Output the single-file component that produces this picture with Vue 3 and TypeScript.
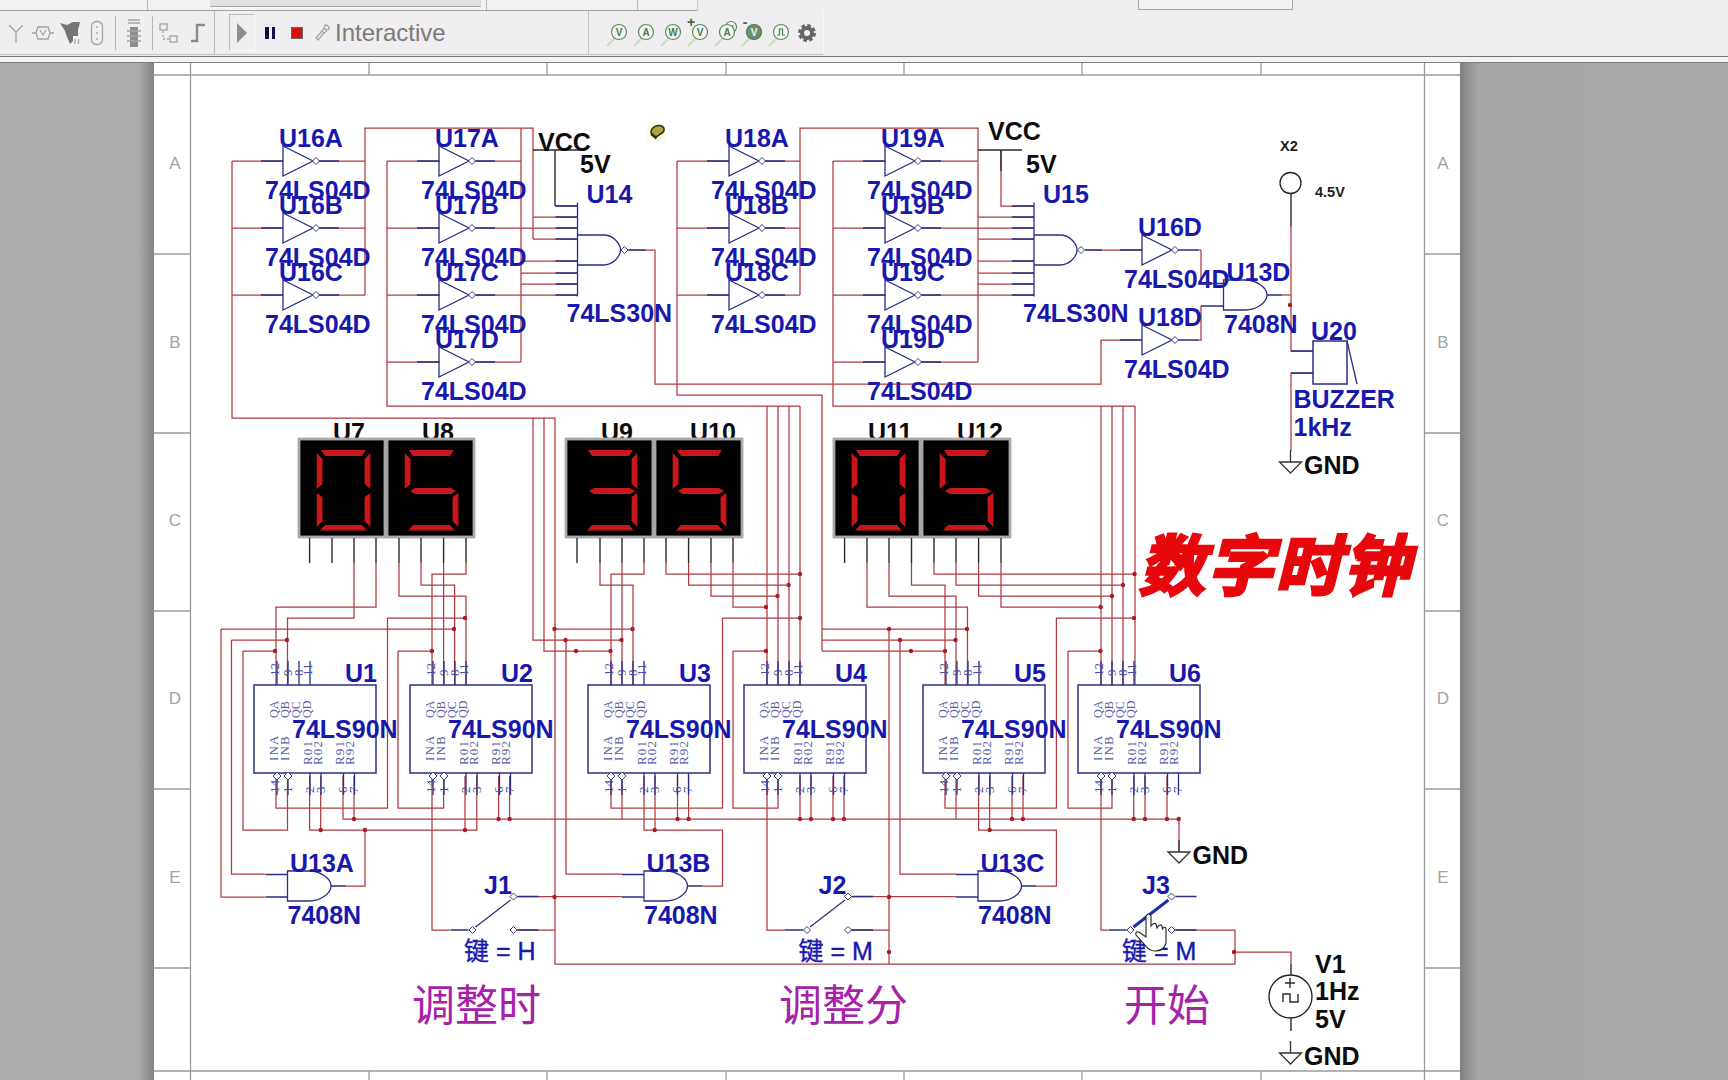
<template>
  <div class="app">
    <div class="tabs">
      <div class="tab-strip">
        <span class="tab tab-a"></span>
        <span class="tab tab-b"></span>
        <span class="tab tab-c"></span>
        <span class="tab tab-d"></span>
      </div>
      <div class="tab-far"></div>
    </div>

    <div class="toolbars">
      <div class="bar">
        <div class="tools tools-misc">
          <span class="tool">
            <svg width="18" height="22" viewBox="0 0 18 22" class="ico"><path d="M9 21V10M2 3l7 7 7-7" /></svg>
          </span>
          <span class="tool">
            <svg width="24" height="20" viewBox="0 0 24 20" class="ico"><path d="M1 10h4M19 10h4M7 4l10 0 2 6-2 6H7l-2-6z" /><path d="M9 7l3 5 3-5" /></svg>
          </span>
          <span class="tool">
            <svg width="22" height="24" viewBox="0 0 22 24"><path class="solid dark" d="M1 2L8 4L14 1L21 1L19 9L19 15L14 15L14 20L11 23L8 16L6 10Z" /><path class="ico" d="M16 18v5M19.5 18v5" /></svg>
          </span>
          <span class="tool">
            <svg width="14" height="26" viewBox="0 0 14 26" class="ico"><rect x="1.5" y="1.5" width="11" height="23" rx="5" /><path d="M7 6v2M7 12v2M7 18v2" /></svg>
          </span>
          <i class="sep sep-a"></i>
          <span class="tool tool-wide">
            <svg width="16" height="30" viewBox="0 0 16 30"><path class="ico" d="M2 2h12M2 5h12" /><rect class="solid" x="4" y="9" width="8" height="20" /><path class="ico" d="M1 13h14M1 18h14M1 23h14" /></svg>
          </span>
          <i class="sep"></i>
          <span class="tool tool-c">
            <svg width="22" height="22" viewBox="0 0 22 22" class="ico"><rect x="2" y="2" width="7" height="6" /><rect x="12" y="14" width="7" height="6" /><path stroke-dasharray="2 2" d="M5 9v8h6" /></svg>
          </span>
          <span class="tool tool-d">
            <svg width="16" height="20" viewBox="0 0 16 20"><path class="step" d="M1 18h6V2h8" /></svg>
          </span>
        </div>

        <div class="tools tools-sim">
          <span class="play">
            <svg width="12" height="22" viewBox="0 0 12 22"><path class="solid" d="M1 1l10 10L1 21z" /></svg>
          </span>
          <span class="pause"><i></i><i></i></span>
          <span class="stop"></span>
          <svg class="wrench ico" width="16" height="18" viewBox="0 0 16 18"><path d="M11 1c3 0 4 2 4 4l-3 1-2-2 1-3zM10 4L8 7l2 2 3-2M8 7L2 14l2 2 6-7" /></svg>
          <span class="sim-mode">Interactive</span>
        </div>

        <div class="tools tools-meters">
          <span v-for="m in meters" :key="m.key" class="meter">
            <svg width="26" height="30" viewBox="0 0 26 30">
              <path class="probe" d="M2 28l8-8" />
              <text v-if="m.sign" x="5" y="9" class="meter-sign">{{ m.sign }}</text>
              <circle v-if="m.key === 'av'" cx="18" cy="9" r="5.5" class="meter-ring" />
              <text v-if="m.key === 'av'" x="18" y="12" class="meter-letter small">V</text>
              <circle cx="14" cy="14" r="7.5" :class="m.heavy ? 'meter-ring heavy' : 'meter-ring'" />
              <path v-if="m.key === 'p'" class="pulse" d="M10 17h2.5v-6h3v6h2.5" />
              <text v-else x="14" y="17.5" :class="m.heavy ? 'meter-letter light' : 'meter-letter'">{{ m.letter }}</text>
            </svg>
          </span>
          <span class="meter">
            <svg width="20" height="22" viewBox="0 0 20 22">
              <circle cx="10" cy="11" r="5" class="gear-in" />
              <circle cx="10" cy="11" r="7.5" class="gear-out" />
            </svg>
          </span>
        </div>
      </div>
      <div class="bar-rest"></div>
    </div>
    <div class="rule-band"></div>

    <div class="workspace">
      <div class="gutter gutter-left"></div>
      <div class="paper">
        <svg class="sheet" width="1306" height="1018" viewBox="154 62 1306 1018">
          <!-- sheet frame -->
          <path class="frame" :d="frameLines" />
          <text v-for="r in rowMarks" :key="'l' + r.t" x="175" :y="r.y" class="mark">{{ r.t }}</text>
          <text v-for="r in rowMarks" :key="'r' + r.t" x="1443" :y="r.y" class="mark">{{ r.t }}</text>

          <!-- display labels sit behind the displays -->
          <text v-for="d in displays" :key="d.name" :x="d.labelX" y="440" class="lb black">{{ d.name }}</text>

          <path v-for="(d, i) in wires" :key="'w' + i" class="wire" :d="d" />
          <circle v-for="(n, i) in nodes" :key="'n' + i" class="node" :cx="n[0]" :cy="n[1]" r="2.2" />

          <!-- seven segment displays -->
          <g v-for="d in displays" :key="'d' + d.name" :transform="`translate(${d.x},438)`">
            <rect x="1" y="0" :width="d.w - 2" height="98" class="disp" />
            <polygon v-for="(s, i) in d.segs" :key="i" class="seg" :points="s" />
            <path class="blk" :d="d.pins" />
          </g>

          <!-- inverters -->
          <g v-for="v in inverters" :key="v.name" :transform="`translate(${v.x},${v.y})`">
            <path class="part" d="M-22 0H0M0 -15V15L30 0ZM36 0H56" />
            <path class="bubble" d="M33 -3.5L36.5 0 33 3.5 29.5 0Z" />
            <text x="-4" y="-14.5" class="lb">{{ v.name }}</text>
            <text x="-18" y="38" class="lb">74LS04D</text>
          </g>

          <!-- NAND gates -->
          <g v-for="g in nands" :key="g.name" :transform="`translate(${g.x},249)`">
            <path class="part" d="M0 -47.5V46.5M0 -44H-22M0 -33H-22M0 -22H-22M0 -11H-22M0 11H-22M0 23H-22M0 34H-22M0 45H-22" />
            <path class="part" d="M0 -15H26C36 -15 43 -6 43 0C43 6 36 15 26 15H0" />
            <path class="bubble" d="M47 -3.5L50.5 0 47 3.5 43.5 0Z" />
            <path class="part" d="M51 0H68" />
            <text x="9" y="-47" class="lb">{{ g.name }}</text>
            <text x="-11" y="71.5" class="lb">74LS30N</text>
          </g>

          <!-- counters -->
          <g v-for="c in chips" :key="c.name" :transform="`translate(${c.x},684)`">
            <rect x="0" y="0" width="122" height="88" class="chip" />
            <path class="part" :d="chipPins" />
            <path class="bubble" d="M23 87L27 91 23 95 19 91ZM34 87L38 91 34 95 30 91Z" />
            <text v-for="p in chipTopPins" :key="'t' + p.t" :transform="`rotate(-90 ${p.x + 4} -9)`" :x="p.x + 4" y="-9" class="pin-no">{{ p.t }}</text>
            <text v-for="p in chipBottomPins" :key="'b' + p.t" :transform="`rotate(-90 ${p.x + 4} 108)`" :x="p.x + 4" y="108" class="pin-no">{{ p.t }}</text>
            <text v-for="p in chipNames" :key="p.t" :transform="`rotate(-90 ${p.x} ${p.y})`" :x="p.x" :y="p.y" :class="p.t[0] === 'Q' ? 'pin-name tight' : 'pin-name'">{{ p.t }}</text>
            <text x="38" y="53" class="lb">74LS90N</text>
            <text x="91" y="-3.5" class="lb">{{ c.name }}</text>
          </g>

          <!-- AND gates -->
          <g v-for="g in ands" :key="g.name" :transform="`translate(${g.x},${g.y})`">
            <path class="part" d="M0 3.5H-22M0 26H-22M43.5 15H58" />
            <path class="part" d="M0 0H22C32 0 43.5 7 43.5 15C43.5 23 32 30 22 30H0Z" />
            <text :x="g.lx" :y="g.ly" class="lb">{{ g.name }}</text>
            <text :x="g.vx" :y="g.vy" class="lb">7408N</text>
          </g>

          <!-- switches -->
          <g v-for="j in switches" :key="j.name" :transform="`translate(${j.x},929)`">
            <path class="part" d="M-22 0H-4M45 -33.5H66M45 0H66" />
            <path :class="j.pressed ? 'arm pressed' : 'arm'" d="M3 -3L38 -30" />
            <path class="bubble" d="M0 -3.5L3.5 0 0 3.5 -3.5 0ZM41 -37L44.5 -33.5 41 -30 37.5 -33.5ZM41 -3.5L44.5 0 41 3.5 37.5 0Z" />
            <text x="11.5" y="-36" class="lb">{{ j.name }}</text>
            <text x="-8.5" y="30" class="lb cjk">{{ j.key }}</text>
          </g>

          <!-- VCC rails -->
          <path class="blk" d="M533 149H581M555 149V205" />
          <path class="blk" d="M978 149H1022M1001 149V170" />
          <text x="538" y="150" class="lb black">VCC</text>
          <text x="580" y="172" class="lb black">5V</text>
          <text x="988" y="139" class="lb black">VCC</text>
          <text x="1026" y="172" class="lb black">5V</text>

          <!-- probe -->
          <circle cx="1290.5" cy="182" r="10.5" class="ring" />
          <path class="blk" d="M1291 193V226" />
          <text x="1280" y="150" class="lb-sm">X2</text>
          <text x="1315" y="196" class="lb-sm">4.5V</text>

          <!-- buzzer -->
          <rect x="1313" y="340" width="34" height="43" class="chip" />
          <path class="part" d="M1347 340L1357 383M1291 350H1313M1291 372H1313" />
          <text x="1311" y="339" class="lb">U20</text>
          <text x="1293.5" y="407" class="lb">BUZZER</text>
          <text x="1293.5" y="435" class="lb">1kHz</text>

          <!-- grounds -->
          <g v-for="g in grounds" :key="g.x" :transform="`translate(${g.x},${g.y})`">
            <path class="ground" d="M0 -12V0M-11 0H11L0 11Z" />
            <text x="13.5" y="12" class="lb black">GND</text>
          </g>

          <!-- clock source -->
          <circle cx="1290.5" cy="995.5" r="21.5" class="ring" />
          <path class="blk" d="M1291 963V974M1291 1017V1030M1285 982H1295M1290 977V987M1283 1001V993H1290V1001H1298V993" />
          <text x="1315" y="972" class="lb black">V1</text>
          <text x="1315" y="999" class="lb black">1Hz</text>
          <text x="1315" y="1027" class="lb black">5V</text>

          <!-- captions -->
          <text x="412" y="1020" class="caption">调整时</text>
          <text x="779" y="1020" class="caption">调整分</text>
          <text x="1124" y="1020" class="caption">开始</text>
          <text transform="translate(1139,589) skewX(-14)" class="title">数字时钟</text>

          <!-- cursor over J3 -->
          <path class="hand" d="M1146 915Q1148.5 911 1151 915L1151 925Q1154 921 1156 923L1157 927Q1160 922 1162 925L1162.5 928Q1165 924 1166 928L1166 942Q1164 950 1155 950Q1149 950 1145 944L1136 934Q1135 930 1139 931L1146 936Z" />

          <!-- little bulb marker -->
          <rect x="647" y="123" width="18" height="18" class="bulb-bg" />
          <path class="bulb" d="M652 134C649 129 654 124 660 124.5C665 125.5 665 130 662 132L656 136Z" />
          <path class="bulb-base" d="M651.5 133L656.5 137.5" />
        </svg>
      </div>
      <div class="gutter gutter-right"></div>
    </div>
  </div>
</template>

<script setup lang="ts">
type Pt = [number, number]

const meters = [
  { key: 'v', letter: 'V', sign: '', heavy: false },
  { key: 'a', letter: 'A', sign: '', heavy: false },
  { key: 'w', letter: 'W', sign: '', heavy: false },
  { key: 'pv', letter: 'V', sign: '+', heavy: false },
  { key: 'av', letter: 'A', sign: '', heavy: false },
  { key: 'nv', letter: 'V', sign: '-', heavy: true },
  { key: 'p', letter: '', sign: '', heavy: false },
]

const rowMarks = [
  { t: 'A', y: 168 },
  { t: 'B', y: 347 },
  { t: 'C', y: 525 },
  { t: 'D', y: 703 },
  { t: 'E', y: 882 },
]

// border rules of the sheet, ticks every 178.4px
const ticksX = [369, 547, 726, 904, 1082, 1261]
const ticksY = [253, 432, 610, 788, 967]
const frameLines = [
  'M154 74H1460M154 1070H1460M190.5 62V1080M1424.5 62V1080',
  ...ticksX.map((x) => `M${x} 62V74M${x} 1070V1080`),
  ...ticksY.map((y) => `M154 ${y}H190M1425 ${y}H1460`),
].join('')

// segment shapes, relative to a display's corner
const SEG: Record<string, string> = {
  a: '23,11 68,11 64,17 27,17',
  b: '72.4,14 66.6,20 66.6,45 72.4,50',
  c: '72.4,54 66.6,58 66.6,82 72.4,88',
  d: '27,86 64,86 69,91.5 22,91.5',
  e: '18.7,54 24.5,58 24.5,82 18.7,88',
  f: '18.7,14 24.5,20 24.5,45 18.7,50',
  g: '24,52 29,49 65,49 70,52 65,55 29,55',
}
const DIGITS: Record<string, string> = { '0': 'abcdef', '3': 'abcdg', '5': 'acdfg' }

function display(name: string, x: number, w: number, digit: string, labelX: number, pins: number[]) {
  return {
    name,
    x,
    w,
    labelX,
    segs: DIGITS[digit].split('').map((s) => SEG[s]),
    pins: pins.map((p) => `M${p - x} 99V124`).join(''),
  }
}

const displays = [
  display('U7', 298, 88, '0', 333, [309.6, 332, 354, 376]),
  display('U8', 386, 89, '5', 422, [399, 421, 443.6, 466]),
  display('U9', 565, 89, '3', 601, [577, 600, 622, 644]),
  display('U10', 654, 89, '5', 690, [666, 688.6, 711, 733]),
  display('U11', 833, 88, '0', 868, [844.6, 867, 889, 911.5]),
  display('U12', 921, 90, '5', 957, [934, 956, 978.6, 1001]),
]

const rows3 = [160, 227, 294]
const rows4 = [160, 227, 294, 361]
const inverters = [
  ...rows3.map((y, i) => ({ name: 'U16' + 'ABC'[i], x: 283, y })),
  ...rows4.map((y, i) => ({ name: 'U17' + 'ABCD'[i], x: 439, y })),
  ...rows3.map((y, i) => ({ name: 'U18' + 'ABC'[i], x: 729, y })),
  ...rows4.map((y, i) => ({ name: 'U19' + 'ABCD'[i], x: 885, y })),
  { name: 'U16D', x: 1142, y: 249 },
  { name: 'U18D', x: 1142, y: 339 },
]

const nands = [
  { name: 'U14', x: 577.5 },
  { name: 'U15', x: 1034 },
]

const chips = [
  { name: 'U1', x: 254 },
  { name: 'U2', x: 410 },
  { name: 'U3', x: 588 },
  { name: 'U4', x: 744 },
  { name: 'U5', x: 923 },
  { name: 'U6', x: 1078 },
]
const chipPins = 'M23 -24V0M34 -24V0M45 -24V0M56 -24V0M23 95V110M34 95V110M56 88V110M67 88V110M89.5 88V110M100.5 88V110'
const chipTopPins = [
  { t: '12', x: 21 },
  { t: '9', x: 34 },
  { t: '8', x: 45 },
  { t: '11', x: 54 },
]
const chipBottomPins = [
  { t: '14', x: 21 },
  { t: '1', x: 34 },
  { t: '2', x: 56 },
  { t: '3', x: 67 },
  { t: '6', x: 89 },
  { t: '7', x: 100 },
]
const chipNames = [
  { t: 'QA', x: 24, y: 33 },
  { t: 'QB', x: 35, y: 33 },
  { t: 'QC', x: 46, y: 33 },
  { t: 'QD', x: 57, y: 33 },
  { t: 'INA', x: 24, y: 76 },
  { t: 'INB', x: 35, y: 76 },
  { t: 'R01', x: 58, y: 80 },
  { t: 'R02', x: 68, y: 80 },
  { t: 'R91', x: 90, y: 80 },
  { t: 'R92', x: 100, y: 80 },
]

const ands = [
  { name: 'U13A', x: 287.5, y: 870, lx: 2.5, ly: 1, vx: 0, vy: 53 },
  { name: 'U13B', x: 644, y: 870, lx: 2.5, ly: 1, vx: 0, vy: 53 },
  { name: 'U13C', x: 978, y: 870, lx: 2.5, ly: 1, vx: 0, vy: 53 },
  { name: 'U13D', x: 1223.5, y: 279, lx: 3, ly: 1, vx: 0.5, vy: 53 },
]

const switches = [
  { name: 'J1', x: 472.5, key: '键 = H', pressed: false },
  { name: 'J2', x: 807, key: '键 = M', pressed: false },
  { name: 'J3', x: 1130.5, key: '键 = M', pressed: true },
]

const grounds = [
  { x: 1290.5, y: 461 },
  { x: 1179, y: 851 },
  { x: 1290.5, y: 1052 },
]

// wires as polylines: x,y x,y ...
function poly(...pts: number[]) {
  let d = ''
  for (let i = 0; i < pts.length; i += 2) d += (i ? 'L' : 'M') + pts[i] + ' ' + pts[i + 1]
  return d
}

const wires: string[] = []

// hours: inverter banks
wires.push(poly(232, 160, 232, 417, 555, 417, 555, 963, 1235, 963, 1235, 929, 1171, 929))
rows3.forEach((y) => wires.push(poly(232, y, 283, y), poly(319, y, 365, y)))
wires.push(poly(365, 294, 365, 127, 533, 127, 533, 238), poly(521, 127, 521, 361))
wires.push(poly(387, 160, 387, 405, 800, 405))
rows4.forEach((y) => wires.push(poly(387, y, 440, y), poly(476, y, 521, y)))
wires.push(poly(555, 205, 577, 205))
;[216, 238].forEach((y) => wires.push(poly(533, y, 577, y)))
;[227, 260, 272, 283, 294].forEach((y) => wires.push(poly(521, y, 577, y)))
wires.push(poly(628, 249, 655, 249, 655, 383, 1101, 383, 1101, 339, 1142, 339))

// minutes: inverter banks
wires.push(poly(677, 160, 677, 394, 822, 394, 822, 650))
rows3.forEach((y) => wires.push(poly(677, y, 729, y), poly(765, y, 800, y)))
wires.push(poly(800, 294, 800, 127, 978, 127, 978, 361))
wires.push(poly(833, 160, 833, 405, 1135, 405))
rows4.forEach((y) => wires.push(poly(833, y, 886, y), poly(922, y, 978, y)))
wires.push(poly(1001, 149, 1001, 205, 1034, 205))
;[216, 227, 238, 260, 272, 283, 294].forEach((y) => wires.push(poly(978, y, 1034, y)))
wires.push(poly(1085, 249, 1142, 249))
;[767, 778, 789, 800, 1101, 1112, 1123, 1135].forEach((x) => wires.push(poly(x, 405, x, 684)))

// U7/U8 to U1/U2
wires.push(poly(354, 562, 354, 617, 287.5, 617, 287.5, 684), poly(376, 562, 376, 606, 276, 606, 276, 684))
wires.push(poly(399, 562, 399, 595, 466, 595, 466, 684), poly(421, 562, 421, 584, 454.6, 584, 454.6, 684))
wires.push(poly(443.6, 562, 443.6, 684), poly(466, 562, 466, 573, 432, 573, 432, 684))
wires.push(poly(221, 628, 454, 628), poly(231.5, 639, 287.5, 639), poly(243, 650, 276, 650))
wires.push(poly(221, 628, 221, 896, 265, 896), poly(231.5, 639, 231.5, 873, 265, 873))
wires.push(poly(243, 650, 243, 829, 287.5, 829, 287.5, 775))
wires.push(poly(276, 775, 276, 807, 387.5, 807, 387.5, 617, 465, 617))
wires.push(poly(398, 650, 432, 650), poly(398, 650, 398, 807, 443.6, 807, 443.6, 775))
wires.push(poly(432, 775, 432, 929, 450, 929))
wires.push(poly(309.6, 775, 309.6, 829, 476.8, 829, 476.8, 775), poly(320.7, 775, 320.7, 829), poly(465, 775, 465, 829))
wires.push(poly(365, 829, 365, 885, 345, 885))

// U9/U10 to U3/U4
wires.push(poly(600, 562, 600, 584, 633, 584, 633, 684), poly(622, 562, 622, 684), poly(644, 562, 644, 573, 611, 573, 611, 684))
wires.push(poly(533, 417, 533, 639, 621.5, 639), poly(544, 417, 544, 650, 610.5, 650), poly(555, 628, 633, 628))
wires.push(poly(566, 639, 566, 873, 622, 873), poly(514, 895.5, 622, 895.5), poly(514, 929, 555, 929))
wires.push(poly(611, 775, 611, 807, 722.5, 807, 722.5, 617, 800, 617), poly(622, 775, 622, 818))
wires.push(poly(644, 775, 644, 829, 722.5, 829, 722.5, 885, 702, 885), poly(655, 775, 655, 829))
wires.push(poly(666, 562, 666, 573, 800, 573), poly(688.6, 562, 688.6, 584, 789, 584))
wires.push(poly(711, 562, 711, 595, 778, 595), poly(733, 562, 733, 606, 767, 606))
wires.push(poly(767, 650, 733, 650, 733, 807, 778, 807, 778, 775), poly(767, 775, 767, 929, 785, 929))

// U11/U12 to U5/U6
wires.push(poly(822, 628, 967, 628), poly(822, 639, 956, 639), poly(822, 650, 945, 650))
wires.push(poly(889, 628, 889, 963), poly(900, 639, 900, 873, 956, 873), poly(848, 895.5, 956, 895.5), poly(848, 929, 889, 929))
wires.push(poly(867, 562, 867, 606, 967.5, 606, 967.5, 684), poly(889, 562, 889, 595, 956, 595, 956, 684))
wires.push(poly(911.5, 562, 911.5, 584, 945, 584, 945, 684))
wires.push(poly(934, 562, 934, 573, 1135, 573), poly(956, 562, 956, 584, 1123.6, 584))
wires.push(poly(978.6, 562, 978.6, 595, 1112.5, 595), poly(1001, 562, 1001, 606, 1101.8, 606))
wires.push(poly(945, 775, 945, 807, 1056.4, 807, 1056.4, 617, 1135, 617), poly(956, 775, 956, 818))
wires.push(poly(978.6, 775, 978.6, 829, 1056.4, 829, 1056.4, 885, 1036, 885), poly(989.6, 775, 989.6, 829))
wires.push(poly(1068, 650, 1101, 650), poly(1068, 650, 1068, 807, 1112, 807, 1112, 775))
wires.push(poly(1101, 775, 1101, 929, 1108, 929))

// ground bus
wires.push(poly(343, 775, 343, 818, 1179, 818, 1179, 851))
;[354, 498.6, 509.6, 677.5, 688.6, 800, 811, 833, 844, 1012, 1023, 1133.7, 1145, 1167].forEach((x) =>
  wires.push(poly(x, 775, x, 818)),
)

// output side
wires.push(poly(1201, 249, 1201, 283, 1202, 283), poly(1197, 249, 1201, 249))
wires.push(poly(1197, 339, 1201, 339, 1201, 305, 1202, 305))
wires.push(poly(1281, 294, 1291, 294), poly(1291, 226, 1291, 350, 1313, 350), poly(1313, 372, 1291, 372, 1291, 450))
wires.push(poly(1235, 951, 1291, 951, 1291, 963))

const nodes: Pt[] = [
  [275, 650], [287, 639], [454, 628], [465, 617], [432, 650],
  [554.5, 628], [565.5, 639], [576, 650], [632.5, 628], [621.5, 639], [610.5, 650],
  [800, 573], [788.6, 584], [777.5, 595], [766, 606], [800, 617], [766, 650],
  [889, 628], [900, 639], [911, 650], [967, 628], [955.5, 639], [945, 650],
  [1134.6, 573], [1123, 584], [1112, 595], [1100.7, 606], [1134, 617], [1100.5, 650],
  [354, 818], [498.6, 818], [509.6, 818], [677.5, 818], [688.6, 818], [800, 818],
  [811, 818], [833, 818], [844, 818], [1012, 818], [1023, 818], [1133.7, 818],
  [1145, 818], [1167, 818], [1178.7, 818],
  [320.7, 829], [365, 829], [465, 829], [654.7, 829], [989.6, 829],
  [554.5, 896], [889, 896], [889, 951], [1234, 951], [1290, 304],
]
</script>

<style scoped>
.app {
  width: 1728px;
  height: 1080px;
  display: flex;
  flex-direction: column;
  background: #f0eef0;
  overflow: hidden;
  font-family: "Liberation Sans", "Noto Sans CJK SC", sans-serif;
}

.tabs {
  height: 11px;
  display: flex;
  justify-content: space-between;
}

.tab-strip {
  width: 698px;
  height: 11px;
  box-sizing: border-box;
  display: flex;
  border-bottom: 1px solid #a5a5a5;
  border-right: 1px solid #c9c9c9;
  background: #f4f3f4;
}

.tab {
  display: block;
  height: 10px;
}

.tab-a {
  width: 147px;
  border-right: 1px solid #b5b5b5;
}

.tab-b {
  width: 62px;
}

.tab-c {
  width: 271px;
  height: 6px;
  background: #dfdfdf;
  border-bottom: 1px solid #a8a8a8;
}

.tab-d {
  width: 150px;
  margin-left: 5px;
  border-left: 1px solid #b5b5b5;
  border-right: 1px solid #b5b5b5;
}

.tab-far {
  width: 155px;
  height: 10px;
  margin-right: 435px;
  box-sizing: border-box;
  background: #f4f2f4;
  border: 1px solid #a8a8a8;
  border-top: 0;
}

.toolbars {
  height: 45px;
  display: flex;
  border-bottom: 1px solid #777;
}

.bar {
  width: 824px;
  height: 44px;
  display: flex;
  border-right: 1px solid #fafafa;
  border-bottom: 1px solid #c4c4c4;
  box-sizing: border-box;
}

.bar-rest {
  flex: 1;
}

.tools {
  display: flex;
  align-items: center;
  height: 100%;
}

.tools-misc {
  width: 215px;
  padding-left: 2px;
  box-sizing: border-box;
  border-right: 1px solid #b8b8b8;
}

.tool {
  width: 27px;
  display: flex;
  justify-content: center;
}

.tool-wide {
  width: 36px;
}

.tool-c {
  width: 32px;
}

.tool-d {
  width: 26px;
}

.sep {
  width: 1px;
  height: 34px;
  background: #b5b5b5;
}

.sep-a {
  margin-left: 5px;
}

.ico {
  fill: none;
  stroke: #a4a4a4;
  stroke-width: 1.3;
}

.solid {
  fill: #8e8e8e;
}

.solid.dark {
  fill: #757575;
}

.step {
  fill: none;
  stroke: #8a8a8a;
  stroke-width: 2.4;
}

.tools-sim {
  width: 374px;
  box-sizing: border-box;
  padding-left: 14px;
  border-right: 1px solid #c4c4c4;
}

.play {
  width: 26px;
  height: 37px;
  box-sizing: border-box;
  border: 1px solid #fbfbfb;
  border-left-color: #b9b9b9;
  border-top-color: #b9b9b9;
  display: flex;
  align-items: center;
  justify-content: center;
}

.pause {
  width: 10px;
  display: flex;
  justify-content: space-between;
  margin-left: 10px;
}

.pause i {
  display: block;
  width: 3.5px;
  height: 12px;
  background: #0e1146;
}

.stop {
  width: 12px;
  height: 12px;
  margin-left: 16px;
  background: #d8100f;
  border: 1px solid #666;
  box-sizing: border-box;
}

.wrench {
  margin-left: 11px;
}

.sim-mode {
  margin-left: 5px;
  font-size: 24px;
  color: #7a7a7a;
}

.tools-meters {
  padding-left: 15px;
}

.meter {
  width: 27px;
  display: flex;
  justify-content: center;
}

.probe {
  fill: none;
  stroke: #c6dfbd;
  stroke-width: 2;
}

.meter-ring {
  fill: #f4f7f2;
  stroke: #5f8a60;
  stroke-width: 1.2;
}

.meter-ring.heavy {
  fill: #6d8f6d;
  stroke: #4e7a50;
}

.pulse {
  fill: none;
  stroke: #4c7a52;
  stroke-width: 1.2;
}

.meter-letter {
  font-size: 10px;
  font-weight: 700;
  text-anchor: middle;
  fill: #4c7a52;
}

.meter-letter.light {
  fill: #f2f6f0;
}

.meter-letter.small {
  font-size: 8px;
}

.meter-sign {
  font-size: 14px;
  font-weight: 700;
  text-anchor: middle;
  fill: #3f6a45;
}

.gear-in {
  fill: none;
  stroke: #666;
  stroke-width: 4;
}

.gear-out {
  fill: none;
  stroke: #666;
  stroke-width: 3;
  stroke-dasharray: 3.5 2.4;
}

.rule-band {
  height: 5px;
  background: #f3f3f3;
  border-bottom: 1px solid #7f7f7f;
}

.workspace {
  flex: 1;
  display: flex;
  min-height: 0;
}

.gutter {
  background: #a8a8a8;
}

.gutter-left {
  width: 154px;
  background: linear-gradient(90deg, #adadad 0, #adadad 138px, #838383 154px);
}

.gutter-right {
  flex: 1;
  background: linear-gradient(90deg, #808080 0, #a6a6a6 18px, #a9a9a9 100%);
}

.paper {
  width: 1306px;
  background: #fff;
  line-height: 0;
}

.sheet {
  display: block;
}

.frame {
  fill: none;
  stroke: #9a9a9a;
  stroke-width: 1.3;
}

.mark {
  font-size: 17px;
  text-anchor: middle;
  fill: #a3a3a3;
}

.lb {
  font-size: 25px;
  font-weight: 700;
  fill: #1818ae;
}

.lb.black {
  fill: #0c0c0c;
}

.lb.cjk {
  font-weight: 400;
  stroke: #1818ae;
  stroke-width: 0.4;
}

.lb-sm {
  font-size: 14.5px;
  font-weight: 700;
  fill: #1c1c1c;
}

.wire {
  fill: none;
  stroke: #b03a3f;
  stroke-width: 1.25;
}

.node {
  fill: #a81c24;
}

.blk {
  fill: none;
  stroke: #2b2b2b;
  stroke-width: 1.4;
}

.disp {
  fill: #000;
  stroke: #a8a8a8;
  stroke-width: 2.8;
}

.seg {
  fill: #c8161b;
}

.part {
  fill: none;
  stroke: #2a2f84;
  stroke-width: 1.3;
}

.bubble {
  fill: #fff;
  stroke: #3a3a78;
  stroke-width: 1;
}

.chip {
  fill: none;
  stroke: #2a2f84;
  stroke-width: 1.5;
}

.pin-no {
  font-family: "Liberation Serif", serif;
  font-size: 13px;
  fill: #4b4fa3;
}

.pin-name {
  font-family: "Liberation Serif", serif;
  font-size: 13px;
  letter-spacing: 1.2px;
  fill: #5a5ea8;
}

.pin-name.tight {
  font-size: 12px;
  letter-spacing: 0;
}

.arm {
  fill: none;
  stroke: #2a2f70;
  stroke-width: 1.2;
}

.arm.pressed {
  stroke: #1c2fa8;
  stroke-width: 3;
}

.ring {
  fill: #fff;
  stroke: #222;
  stroke-width: 1.3;
}

.ground {
  fill: #fff;
  stroke: #333;
  stroke-width: 1.3;
}

.caption {
  font-size: 43px;
  font-weight: 400;
  fill: #a622a8;
}

.title {
  font-size: 66px;
  font-weight: 700;
  fill: #e6080c;
  stroke: #e6080c;
  stroke-width: 3;
  letter-spacing: 2px;
}

.hand {
  fill: #fff;
  stroke: #222;
  stroke-width: 1.1;
}

.bulb-bg {
  fill: #fbfbe4;
}

.bulb {
  fill: #a9a83e;
  stroke: #2f3420;
  stroke-width: 1.6;
}

.bulb-base {
  fill: none;
  stroke: #2f3420;
  stroke-width: 2.4;
}
</style>
